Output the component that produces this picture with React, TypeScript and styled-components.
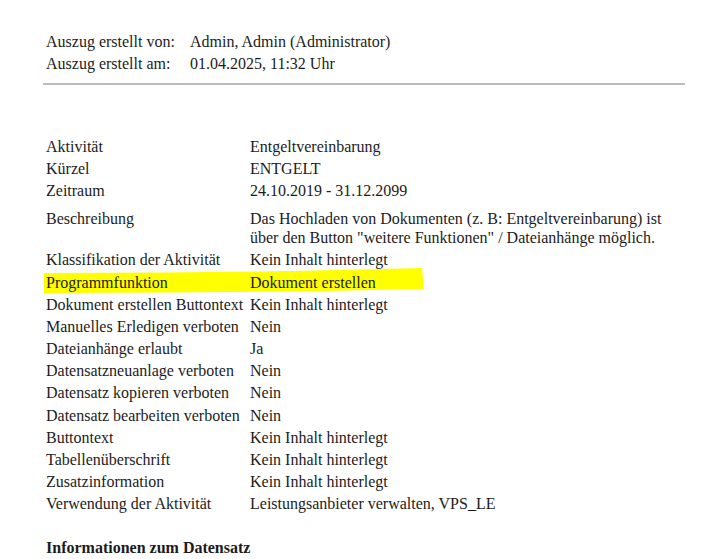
import React from "react";
import styled, { createGlobalStyle } from "styled-components";

const Global = createGlobalStyle`
  html, body { margin: 0; padding: 0; background: #ffffff; }
  body { font-family: "Liberation Serif", "Times New Roman", serif; color: #1c1c1c; }
`;

const Page = styled.div`
  width: 705px;
  padding: 31px 20px 0 43px;
  box-sizing: border-box;
  font-size: 16px;
`;

const HeaderGrid = styled.div`
  display: grid;
  grid-template-columns: 144px auto;
  padding-left: 3px;
  line-height: 22px;
`;

const Rule = styled.hr`
  margin: 8px 0 0 0;
  width: 642px;
  border: none;
  height: 2px;
  background: #bdbdbd;
`;

const Table = styled.div`
  display: grid;
  grid-template-columns: 204px 435px;
  padding-left: 3px;
  margin-top: 50px;
`;

const Row = styled.div<{ $extraTop?: number }>`
  display: contents;
  & > div {
    padding-top: ${(p) => 1.6 + (p.$extraTop ?? 0)}px;
    padding-bottom: 1.6px;
    line-height: 19px;
  }
`;

const Label = styled.div`
  position: relative;
  z-index: 1;
`;

const Value = styled.div`
  position: relative;
  z-index: 1;
`;

const Marker = styled.svg`
  position: absolute;
  left: -2px;
  top: 0;
  z-index: 0;
  overflow: visible;
  pointer-events: none;
`;

const MarkedText = styled.span`
  position: relative;
`;

const SectionTitle = styled.div`
  font-weight: bold;
  margin-top: 23px;
  padding-left: 3px;
  line-height: 19px;
`;

const rows: [string, string][] = [
  ["Aktivität", "Entgeltvereinbarung"],
  ["Kürzel", "ENTGELT"],
  ["Zeitraum", "24.10.2019 - 31.12.2099"],
];

const rows3: [string, string][] = [
  ["Dokument erstellen Buttontext", "Kein Inhalt hinterlegt"],
  ["Manuelles Erledigen verboten", "Nein"],
  ["Dateianhänge erlaubt", "Ja"],
  ["Datensatzneuanlage verboten", "Nein"],
  ["Datensatz kopieren verboten", "Nein"],
  ["Datensatz bearbeiten verboten", "Nein"],
  ["Buttontext", "Kein Inhalt hinterlegt"],
  ["Tabellenüberschrift", "Kein Inhalt hinterlegt"],
  ["Zusatzinformation", "Kein Inhalt hinterlegt"],
  ["Verwendung der Aktivität", "Leistungsanbieter verwalten, VPS_LE"],
];

export default function App() {
  return (
    <>
      <Global />
      <Page>
        <HeaderGrid>
          <div>Auszug erstellt von:</div>
          <div>Admin, Admin (Administrator)</div>
          <div>Auszug erstellt am:</div>
          <div>01.04.2025, 11:32 Uhr</div>
        </HeaderGrid>
        <Rule />
        <Table>
          {rows.map(([l, v]) => (
            <Row key={l}>
              <Label>{l}</Label>
              <Value>{v}</Value>
            </Row>
          ))}
          <Row $extraTop={6}>
            <Label>Beschreibung</Label>
            <Value>
              Das Hochladen von Dokumenten (z. B: Entgeltvereinbarung) ist über den Button "weitere Funktionen" / Dateianhänge möglich.
            </Value>
          </Row>
          <Row>
            <Label>Klassifikation der Aktivität</Label>
            <Value>Kein Inhalt hinterlegt</Value>
          </Row>
          <Row>
            <Label>
              <Marker width="380" height="24" viewBox="0 0 380 24">
                <path
                  d="M0 2 L120 1.5 L250 0 L378 -3 L380 18 L250 20.5 L120 21.5 L0 22 Z"
                  fill="#ffff00"
                />
              </Marker>
              <MarkedText>Programmfunktion</MarkedText>
            </Label>
            <Value>Dokument erstellen</Value>
          </Row>
          {rows3.map(([l, v]) => (
            <Row key={l}>
              <Label>{l}</Label>
              <Value>{v}</Value>
            </Row>
          ))}
        </Table>
        <SectionTitle>Informationen zum Datensatz</SectionTitle>
      </Page>
    </>
  );
}
